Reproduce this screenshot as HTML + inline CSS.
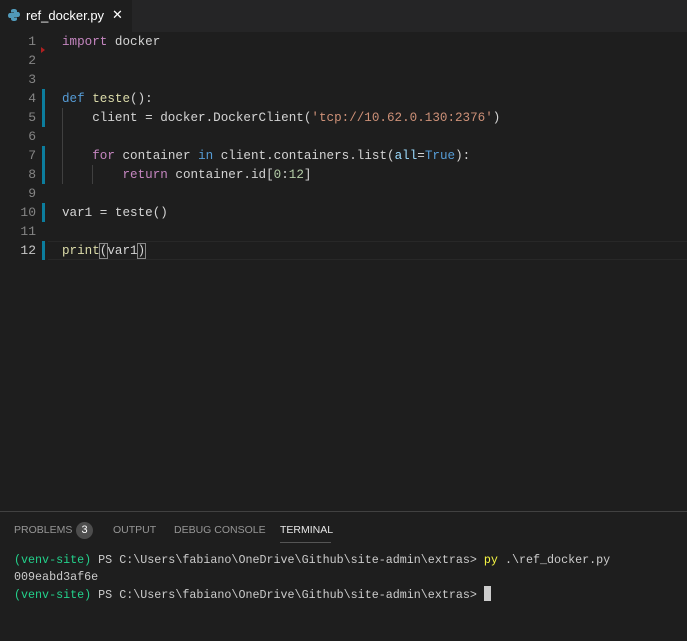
<!DOCTYPE html><html><head><style>
body{margin:0;width:687px;height:640px;background:#1e1e1e;overflow:hidden;font-family:"Liberation Mono",monospace;position:relative}
.tabs{position:absolute;left:0;top:0;width:687px;height:32px;background:#252526}
.tab{position:absolute;left:0;top:0;width:132px;height:32px;background:#1e1e1e;color:#fff;font:13px "Liberation Sans",sans-serif}
.code{position:absolute;left:0;top:32px;width:687px}
.ln{position:absolute;left:0;width:36px;text-align:right;color:#858585;font-size:13px;line-height:19px}
.l{position:absolute;left:62px;font-size:12.6px;line-height:19px;color:#d4d4d4;white-space:pre;margin-top:1px}
.k{color:#c586c0}.b{color:#569cd6}.f{color:#dcdcaa}.s{color:#ce9178}.v{color:#9cdcfe}.n{color:#b5cea8}
.bar{position:absolute;left:42px;width:3px;height:19px;background:#0c7d9d}
.guide{position:absolute;width:1px;background:#404040}
.panel{position:absolute;left:0;top:511px;width:687px;height:129px;border-top:1px solid #414141;background:#1e1e1e}
.pt{position:absolute;top:12px;font:10.5px "Liberation Sans",sans-serif;color:#969696}
.t{position:absolute;left:14px;font-size:11.7px;line-height:17px;color:#ccc;white-space:pre}
.g{color:#23d18b}.y{color:#f5f543}
</style></head><body>
<div class="tabs"><div class="tab">
<svg style="position:absolute;left:8px;top:9px" width="12" height="12" viewBox="0 0 12 12"><path d="M6 0C3 0 3 1.3 3 2v1.5h3v.5H2C.8 4 0 5 0 6.5S.8 9 2 9h1V7.5C3 6.5 4 6 5 6h3c.8 0 1-.7 1-1.3V2C9 1 8 0 6 0z" fill="#519aba"/><path d="M6 12c3 0 3-1.3 3-2V8.5H6V8h4c1.2 0 2-1 2-2.5S11.2 3 10 3H9v1.5C9 5.5 8 6 7 6H4c-.8 0-1 .7-1 1.3V10c0 1 1 2 3 2z" fill="#519aba"/></svg>
<span style="position:absolute;left:26px;top:8px">ref_docker.py</span>
<span style="position:absolute;left:112px;top:7px;font-size:13px">✕</span></div></div>
<div class="code">
<div class="ln" style="top:0">1</div><div class="ln" style="top:19px">2</div><div class="ln" style="top:38px">3</div><div class="ln" style="top:57px">4</div><div class="ln" style="top:76px">5</div><div class="ln" style="top:95px">6</div><div class="ln" style="top:114px">7</div><div class="ln" style="top:133px">8</div><div class="ln" style="top:152px">9</div><div class="ln" style="top:171px">10</div><div class="ln" style="top:190px">11</div><div class="ln" style="top:209px;color:#c6c6c6">12</div>
<div style="position:absolute;left:41px;top:15px;width:0;height:0;border-left:4px solid #b02020;border-top:3px solid transparent;border-bottom:3px solid transparent"></div>
<div class="bar" style="top:57px"></div><div class="bar" style="top:76px"></div><div class="bar" style="top:114px"></div><div class="bar" style="top:133px"></div><div class="bar" style="top:171px"></div><div class="bar" style="top:209px"></div>
<div class="guide" style="left:62px;top:76px;height:76px"></div><div class="guide" style="left:92px;top:133px;height:19px"></div>
<div style="position:absolute;left:48px;top:209px;width:639px;height:17px;border-top:1px solid #282828;border-bottom:1px solid #282828"></div>
<div class="l" style="top:0"><span class="k">import</span> docker</div>
<div class="l" style="top:57px"><span class="b">def</span> <span class="f">teste</span>():</div>
<div class="l" style="top:76px">    client = docker.DockerClient(<span class="s">'tcp://10.62.0.130:2376'</span>)</div>
<div class="l" style="top:114px">    <span class="k">for</span> container <span class="b">in</span> client.containers.list(<span class="v">all</span>=<span class="b">True</span>):</div>
<div class="l" style="top:133px">        <span class="k">return</span> container.id[<span class="n">0</span>:<span class="n">12</span>]</div>
<div class="l" style="top:171px">var1 = teste()</div>
<div class="l" style="top:209px"><span class="f">print</span><span style="outline:1px solid #888">(</span>var1<span style="outline:1px solid #888">)</span></div>
</div>
<div class="panel">
<span class="pt" style="left:14px">PROBLEMS</span>
<span style="position:absolute;left:76px;top:10px;width:17px;height:17px;border-radius:9px;background:#4d4d4d;color:#fff;font:11px 'Liberation Sans',sans-serif;text-align:center;line-height:17px">3</span>
<span class="pt" style="left:113px">OUTPUT</span><span class="pt" style="left:174px">DEBUG CONSOLE</span>
<span class="pt" style="left:280px;color:#e7e7e7">TERMINAL</span>
<div style="position:absolute;left:280px;top:30px;width:51px;height:1px;background:#555"></div>
<div class="t" style="top:40px"><span class="g">(venv-site)</span> PS C:\Users\fabiano\OneDrive\Github\site-admin\extras&gt; <span class="y">py</span> .\ref_docker.py</div>
<div class="t" style="top:57px">009eabd3af6e</div>
<div class="t" style="top:74px"><span class="g">(venv-site)</span> PS C:\Users\fabiano\OneDrive\Github\site-admin\extras&gt; <span style="display:inline-block;width:7px;height:15px;background:#ccc;vertical-align:-3px"></span></div>
</div>
</body></html>
